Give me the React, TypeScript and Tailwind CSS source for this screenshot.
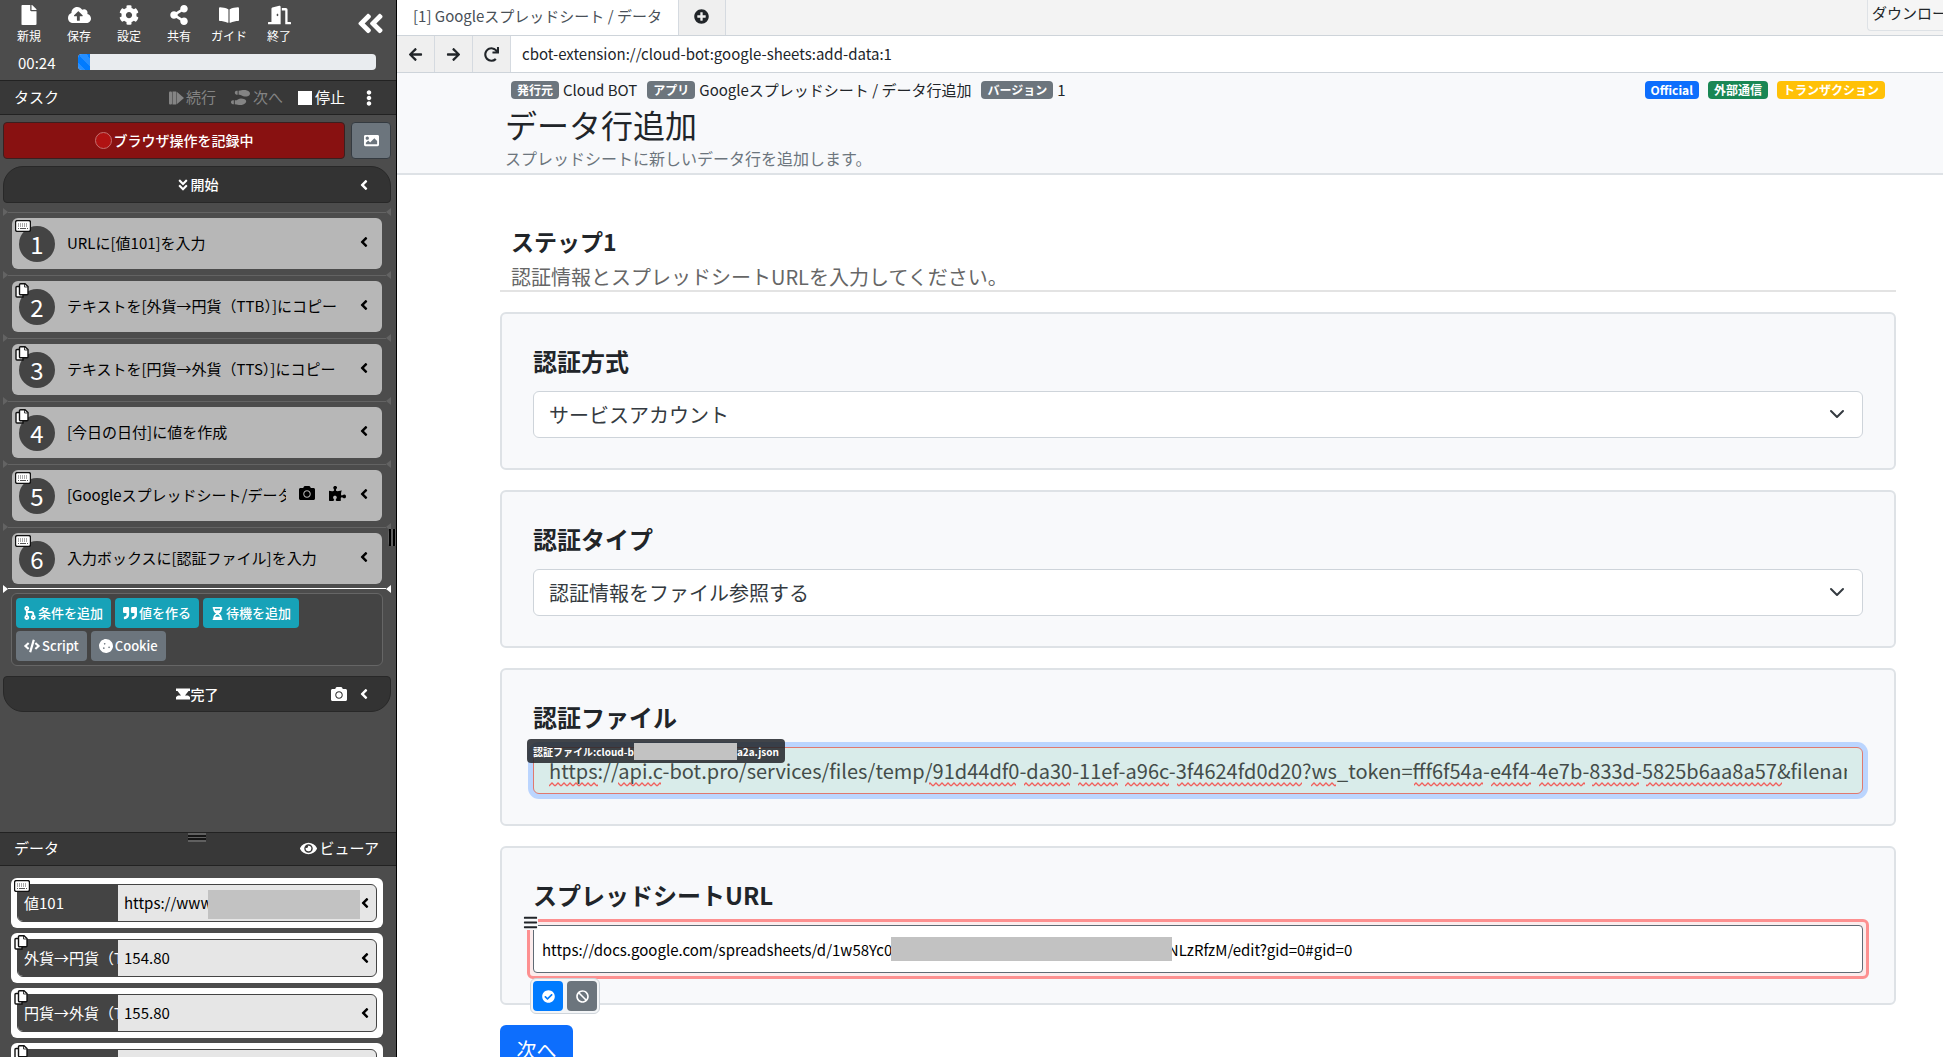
import type { ReactNode } from 'react';
import {
  FaAngleDoubleDown,
  FaAngleDoubleLeft,
  FaAngleLeft,
  FaArrowLeft,
  FaArrowRight,
  FaBan,
  FaBars,
  FaBookOpen,
  FaCamera,
  FaCheckCircle,
  FaCloudUploadAlt,
  FaCode,
  FaCog,
  FaCookie,
  FaDoorOpen,
  FaEllipsisV,
  FaEye,
  FaFile,
  FaHourglassHalf,
  FaImage,
  FaPlusCircle,
  FaPuzzlePiece,
  FaQuoteRight,
  FaRedo,
  FaShareAlt,
  FaShoePrints,
} from 'react-icons/fa';

type StepKind = 'input' | 'copy';

const tools = [
  { icon: FaFile, label: '新規' },
  { icon: FaCloudUploadAlt, label: '保存' },
  { icon: FaCog, label: '設定' },
  { icon: FaShareAlt, label: '共有' },
  { icon: FaBookOpen, label: 'ガイド' },
  { icon: FaDoorOpen, label: '終了' },
];

const steps: { kind: StepKind; text: string; extension?: boolean }[] = [
  { kind: 'input', text: 'URLに[値101]を入力' },
  { kind: 'copy', text: 'テキストを[外貨→円貨（TTB）]にコピー' },
  { kind: 'copy', text: 'テキストを[円貨→外貨（TTS）]にコピー' },
  { kind: 'copy', text: '[今日の日付]に値を作成' },
  { kind: 'input', text: '[Googleスプレッドシート/データ行追加]', extension: true },
  { kind: 'input', text: '入力ボックスに[認証ファイル]を入力' },
];

const dataItems: { kind: StepKind; name: string; value: string; masked?: boolean }[] = [
  { kind: 'input', name: '値101', value: 'https://www', masked: true },
  { kind: 'copy', name: '外貨→円貨（TTB）', value: '154.80' },
  { kind: 'copy', name: '円貨→外貨（TTS）', value: '155.80' },
  { kind: 'copy', name: '今日の日付', value: '' },
];

// [start, width] of the words marked by the spell checker
const misspelled = [
  [0, 49],
  [69, 43],
  [380, 87],
  [475, 46],
  [529, 40],
  [576, 44],
  [628, 125],
  [762, 25],
  [865, 69],
  [942, 40],
  [990, 46],
  [1043, 47],
  [1097, 136],
];

function KindIcon({ kind }: { kind: StepKind }) {
  if (kind === 'input') {
    return (
      <svg width="16" height="12" viewBox="0 0 16 12" className="block">
        <rect x="0.5" y="0.5" width="15" height="11" rx="2" fill="#fff" stroke="#111" strokeWidth="1.4" />
        <path d="M3 4h10M3 6h10" stroke="#555" strokeWidth="1" strokeDasharray="1 1" />
        <path d="M3 8.5h1M5 8.5h6M12 8.5h1" stroke="#555" strokeWidth="1" />
      </svg>
    );
  }
  return (
    <svg width="14" height="15" viewBox="0 0 14 15" className="block">
      <path d="M1 4.5a1 1 0 0 1 1-1h6v10.5H2a1 1 0 0 1-1-1z" fill="#fff" stroke="#111" strokeWidth="1.4" />
      <path d="M4.5 1.7a1 1 0 0 1 1-1H10L13 3.5v7.2a1 1 0 0 1-1 1H5.5a1 1 0 0 1-1-1z" fill="#fff" stroke="#111" strokeWidth="1.4" />
      <path d="M9.5 1v3h3" fill="none" stroke="#111" strokeWidth="0.8" />
    </svg>
  );
}

function ContinueIcon() {
  return (
    <svg width="15" height="14" viewBox="0 0 15 14" fill="currentColor">
      <rect x="0" y="0.5" width="3" height="13" rx="1" />
      <rect x="3.5" y="0.5" width="3.5" height="13" />
      <path d="M7.5 0.5 L15 7 L7.5 13.5z" />
    </svg>
  );
}

function BranchIcon() {
  return (
    <svg width="12" height="14" viewBox="0 0 12 14" fill="none" stroke="currentColor" strokeWidth="1.8">
      <circle cx="2.8" cy="2.5" r="1.5" />
      <circle cx="2.8" cy="11.5" r="1.5" />
      <circle cx="9.3" cy="11.5" r="1.5" />
      <path d="M2.8 4v6M2.8 6h4.5a2 2 0 0 1 2 2v2" />
    </svg>
  );
}

function FinishIcon() {
  return (
    <svg width="14" height="12" viewBox="0 0 14 12" fill="currentColor">
      <path d="M0 0.5h14v2.5h-1.5L9 7.5h3L14 9v2.5H0V9l2-1.5h3L1.5 3H0z" />
    </svg>
  );
}

function Separator({ active = false }: { active?: boolean }) {
  return (
    <div className={`-mx-[9px] flex items-center ${active ? 'h-[9px] text-white' : 'h-3 text-[#636363]'}`}>
      <span className="border-y-[4px] border-l-[5px] border-y-transparent border-l-current" />
      <span className="h-px flex-1 bg-current" />
      <span className="border-y-[4px] border-r-[5px] border-y-transparent border-r-current" />
    </div>
  );
}

function ActionButton({ icon, children, tone }: { icon: ReactNode; children: ReactNode; tone: 'info' | 'gray' }) {
  return (
    <button
      type="button"
      className={`flex h-[30px] items-center gap-[2px] rounded px-2 text-[13px] font-medium whitespace-nowrap text-white ${
        tone === 'info' ? 'bg-[#17a2b8]' : 'bg-[#6c757d]'
      }`}
    >
      {icon}
      {children}
    </button>
  );
}

function Sidebar() {
  return (
    <aside className="relative flex w-[397px] shrink-0 flex-col border-r border-black bg-[#4c4c4c] text-[15px] text-white">
      <div className="flex items-start pt-[5px] pr-[10px] pl-1">
        {tools.map((tool) => (
          <button key={tool.label} type="button" className="flex w-[50px] flex-col items-center text-[12px] leading-[22px]">
            <tool.icon size={tool.label === '終了' || tool.label === '保存' ? 23 : 20} className="h-5" />
            {tool.label}
          </button>
        ))}
        <button type="button" aria-label="サイドバーを閉じる" className="mt-[3px] ml-auto">
          <FaAngleDoubleLeft size={31} />
        </button>
      </div>
      <div className="flex h-[33px] items-center pr-5 pb-[3px] pl-[18px]">
        <span className="w-[60px] leading-none">00:24</span>
        <div className="h-4 flex-1 overflow-hidden rounded bg-[#e9ecef]">
          <div className="h-full w-[4%] bg-[#007bff] bg-[linear-gradient(45deg,rgba(255,255,255,0.15)_25%,transparent_25%,transparent_50%,rgba(255,255,255,0.15)_50%,rgba(255,255,255,0.15)_75%,transparent_75%)] bg-[length:16px_16px]" />
        </div>
      </div>

      <div className="flex h-[35px] items-center border-y border-[#222] bg-[#383838] pr-[19px] pl-[14px]">
        <h2>タスク</h2>
        <button type="button" className="ml-auto flex items-center gap-[2px] text-[#848484]" disabled>
          <ContinueIcon />
          続行
        </button>
        <button type="button" className="ml-[15px] flex items-center gap-[3px] text-[#848484]" disabled>
          <FaShoePrints size={19} />
          次へ
        </button>
        <button type="button" className="ml-[15px] flex items-center gap-[3px]">
          <span className="size-[14px] bg-white" />
          停止
        </button>
        <button type="button" aria-label="メニュー" className="ml-4">
          <FaEllipsisV size={16} />
        </button>
      </div>

      <div className="flex gap-[6px] pt-[7px] pr-[5px] pl-[3px] text-[14px]">
        <button type="button" className="flex h-[37px] flex-1 items-center justify-center gap-[2px] rounded border border-[#3a2020] bg-[#881111] font-medium">
          <span className="size-[17px] rounded-full border border-[#c47070] bg-[#b01212]" />
          ブラウザ操作を記録中
        </button>
        <button type="button" aria-label="画像" className="flex w-10 items-center justify-center rounded border border-[#343a40] bg-[#6c757d]">
          <FaImage size={15} />
        </button>
      </div>

      <div className="pt-[7px] pr-[5px] pl-[3px]">
        <div className="relative flex h-[37px] items-center justify-center gap-px rounded-t-[20px] rounded-b border border-[#282828] bg-[#333] text-[14px] font-medium">
          <FaAngleDoubleDown size={14} />
          開始
          <button type="button" aria-label="開始の詳細" className="absolute right-[18px]">
            <FaAngleLeft size={16} />
          </button>
        </div>
      </div>

      <ol className="pt-[3px] pr-[14px] pl-3">
        {steps.map((step, index) => (
          <li key={index}>
            <Separator />
            <div className="relative flex h-[51px] items-center rounded-md bg-[#b7b7b7] pr-[10px] pl-[7px] text-black">
              <span className="flex size-9 shrink-0 items-center justify-center rounded-full bg-[#444] text-[24px] leading-none text-white">
                {index + 1}
              </span>
              <span className="absolute top-[2px] left-[3px]">
                <KindIcon kind={step.kind} />
              </span>
              <span className="ml-3 min-w-0 flex-1 overflow-hidden whitespace-nowrap">{step.text}</span>
              {step.extension && (
                <span className="mb-1 ml-[13px] flex gap-[14px]">
                  <FaCamera size={16} />
                  <FaPuzzlePiece size={17} />
                </span>
              )}
              <button type="button" aria-label={`${index + 1}の詳細`} className="mb-1 ml-[10px]">
                <FaAngleLeft size={16} />
              </button>
            </div>
          </li>
        ))}
        <li>
          <Separator active />
        </li>
      </ol>

      <div className="mr-[13px] ml-[11px] flex flex-col gap-[3px] rounded-md border border-[#666] bg-[#444] p-1">
        <div className="flex gap-1">
          <ActionButton tone="info" icon={<BranchIcon />}>
            条件を追加
          </ActionButton>
          <ActionButton tone="info" icon={<FaQuoteRight size={14} />}>
            値を作る
          </ActionButton>
          <ActionButton tone="info" icon={<FaHourglassHalf size={13} />}>
            待機を追加
          </ActionButton>
        </div>
        <div className="flex gap-1">
          <ActionButton tone="gray" icon={<FaCode size={16} />}>
            Script
          </ActionButton>
          <ActionButton tone="gray" icon={<FaCookie size={14} />}>
            Cookie
          </ActionButton>
        </div>
      </div>

      <div className="pt-[10px] pr-[5px] pl-[3px]">
        <div className="relative flex h-9 items-center justify-center gap-px rounded-t rounded-b-[20px] border border-[#282828] bg-[#333] text-[14px] font-medium">
          <FinishIcon />
          完了
          <span className="absolute right-[18px] flex items-center gap-[9px]">
            <FaCamera size={16} />
            <button type="button" aria-label="完了の詳細">
              <FaAngleLeft size={16} />
            </button>
          </span>
        </div>
      </div>

      <section className="mt-auto h-[225px] overflow-hidden">
        <div className="relative flex h-[34px] items-center justify-between border-y border-[#222] bg-[#383838] pr-[17px] pb-[2px] pl-[14px]">
          <h2>データ</h2>
          <button type="button" className="flex items-center gap-[3px]">
            <FaEye size={17} />
            ビューア
          </button>
          <span className="absolute top-0 left-[188px] flex h-[9px] w-[18px] flex-col justify-evenly bg-[#606060]">
            <span className="h-[2px] bg-[#151515]" />
            <span className="h-[2px] bg-[#151515]" />
          </span>
        </div>
        <ul className="flex flex-col gap-[5px] pt-3 pr-[13px] pl-[11px]">
          {dataItems.map((item) => (
            <li key={item.name} className="relative rounded-md bg-white p-[6px]">
              <div className="flex h-[38px] items-center overflow-hidden rounded-md border border-[#444] bg-[#e6e6e6] text-black">
                <span className="flex h-full w-[100px] shrink-0 items-center overflow-hidden bg-[#444] pl-[6px] whitespace-nowrap text-white">
                  {item.name}
                </span>
                <span className="ml-[6px] flex-1 whitespace-nowrap">{item.value}</span>
                <button type="button" aria-label={`${item.name}の詳細`} className="mr-[3px]">
                  <FaAngleLeft size={16} />
                </button>
              </div>
              {item.masked && <span className="absolute top-3 right-[23px] h-[29px] w-[152px] bg-[#c2c2c2]" />}
              <span className="absolute top-[2px] left-[3px]">
                <KindIcon kind={item.kind} />
              </span>
            </li>
          ))}
        </ul>
      </section>

      <span className="absolute top-[529px] right-0 flex h-[17px] w-2 justify-evenly rounded-l-sm bg-[#606060]">
        <span className="w-[2px] bg-black" />
        <span className="w-[2px] bg-black" />
      </span>
    </aside>
  );
}

function Badge({ className, children }: { className: string; children: ReactNode }) {
  return <span className={`rounded px-[6px] text-[12px] leading-[18px] font-bold text-white ${className}`}>{children}</span>;
}

function BrowserBar() {
  return (
    <>
      <div className="flex h-9 overflow-hidden border-b border-[#ced4da] bg-[#f3f3f3] text-[15px]">
        <button type="button" className="border-r border-[#d5dae0] bg-white px-4 pb-[2px] whitespace-nowrap text-[#495057]">
          [1] Googleスプレッドシート / データ
        </button>
        <button type="button" aria-label="タブを追加" className="flex w-[47px] items-center justify-center border-r border-[#d5dae0] bg-[#efefef] pb-[2px]">
          <FaPlusCircle size={15} />
        </button>
        <button type="button" className="ml-auto h-[31px] w-[76px] overflow-hidden rounded-bl border-b border-l border-[#dee2e6] bg-[#f5f5f5] pb-[3px] pl-1 text-left whitespace-nowrap">
          ダウンロード
        </button>
      </div>
      <div className="flex h-[37px] border-b border-[#ced4da] text-[15px]">
        <button type="button" aria-label="戻る" className="flex w-[38px] items-center justify-center border-r border-[#d5dae0] bg-[#efefef]">
          <FaArrowLeft size={15} />
        </button>
        <button type="button" aria-label="進む" className="flex w-[38px] items-center justify-center border-r border-[#d5dae0] bg-[#efefef]">
          <FaArrowRight size={15} />
        </button>
        <button type="button" aria-label="再読み込み" className="flex w-[38px] items-center justify-center border-r border-[#d5dae0] bg-[#efefef]">
          <FaRedo size={15} />
        </button>
        <input aria-label="アドレス" className="flex-1 px-[11px] outline-none" defaultValue="cbot-extension://cloud-bot:google-sheets:add-data:1" />
      </div>
    </>
  );
}

function FieldCard({ id, label, children }: { id: string; label: string; children: ReactNode }) {
  return (
    <div className="rounded-md border-2 border-[#dee2e6] bg-[#f8f9fb] px-[31px] pt-[29px] pb-[30px]">
      <label htmlFor={id} className="mb-3 block text-[24px] leading-9 font-bold">
        {label}
      </label>
      {children}
    </div>
  );
}

function SelectBox({ id, value }: { id: string; value: string }) {
  return (
    <div className="relative">
      <select id={id} className="block h-[47px] w-full appearance-none rounded-md border border-[#ced4da] bg-white px-[15px] text-[20px] text-[#343a40]">
        <option>{value}</option>
      </select>
      <svg width="16" height="16" viewBox="0 0 16 16" className="pointer-events-none absolute top-[15px] right-[18px]">
        <path d="m2 5 6 6 6-6" fill="none" stroke="#343a40" strokeWidth="2" strokeLinecap="round" strokeLinejoin="round" />
      </svg>
    </div>
  );
}

function Squiggles() {
  return (
    <svg width="1240" height="5" className="pointer-events-none absolute top-[35px] left-4 max-w-none">
      <defs>
        <pattern id="squiggle" width="6" height="5" patternUnits="userSpaceOnUse">
          <path d="M0 4 L3 1 L6 4" fill="none" stroke="#f0605c" strokeWidth="1.3" />
        </pattern>
      </defs>
      {misspelled.map(([x, width]) => (
        <rect key={x} x={x} y="0" width={width} height="5" fill="url(#squiggle)" />
      ))}
    </svg>
  );
}

export default function App() {
  return (
    <div className="flex h-screen overflow-hidden bg-white font-['Noto_Sans_CJK_JP',sans-serif] text-[#212529]">
      <Sidebar />
      <main className="min-w-0 flex-1">
        <BrowserBar />

        <header className="border-b-2 border-[#dee2e6] bg-[#f8f9fb] pt-[7px] pr-[58px] pb-1 pl-[108px]">
          <div className="flex items-center pl-[6px] text-[15px] leading-5">
            <Badge className="bg-[#6c757d]">発行元</Badge>
            <span className="mr-[10px] ml-1">Cloud BOT</span>
            <Badge className="bg-[#6c757d]">アプリ</Badge>
            <span className="mr-[10px] ml-1">Googleスプレッドシート / データ行追加</span>
            <Badge className="bg-[#6c757d]">バージョン</Badge>
            <span className="ml-1">1</span>
            <div className="ml-auto flex gap-[9px]">
              <Badge className="bg-[#0d6efd]">Official</Badge>
              <Badge className="bg-[#198754]">外部通信</Badge>
              <Badge className="bg-[#ffc107]">トランザクション</Badge>
            </div>
          </div>
          <h1 className="mt-[2px] text-[32px] leading-[45px]">データ行追加</h1>
          <p className="leading-[22px] text-[#6c757d]">スプレッドシートに新しいデータ行を追加します。</p>
        </header>

        <form className="pt-[48px] pr-[47px] pl-[103px]">
          <div className="mb-5 border-b-2 border-[#e3e3e3] pl-[11px]">
            <h2 className="mb-1 text-[23px] leading-9 font-bold">ステップ1</h2>
            <p className="text-[20px] leading-[27px] text-[#666]">認証情報とスプレッドシートURLを入力してください。</p>
          </div>

          <div className="flex flex-col gap-5">
            <FieldCard id="auth-method" label="認証方式">
              <SelectBox id="auth-method" value="サービスアカウント" />
            </FieldCard>
            <FieldCard id="auth-type" label="認証タイプ">
              <SelectBox id="auth-type" value="認証情報をファイル参照する" />
            </FieldCard>
            <FieldCard id="auth-file" label="認証ファイル">
              <div className="relative">
                <input
                  id="auth-file"
                  spellCheck={false}
                  className="block h-[47px] w-full rounded-md border border-[#e0796f] bg-[#d9ecea] px-[15px] text-[20px] text-[#444c49] ring-[5px] ring-[#bbd5fe] outline-none"
                  defaultValue="https://api.c-bot.pro/services/files/temp/91d44df0-da30-11ef-a96c-3f4624fd0d20?ws_token=fff6f54a-e4f4-4e7b-833d-5825b6aa8a57&filename=cloud-bot.json"
                />
                <Squiggles />
                <div className="absolute -top-2 -left-[6px] flex h-6 items-center rounded-sm bg-[#212529]/85 px-[6px] text-[10px] font-bold text-white">
                  認証ファイル:cloud-b
                  <span className="h-[17px] w-[103px] bg-[#c2c2c2]" />
                  a2a.json
                </div>
              </div>
            </FieldCard>
            <FieldCard id="sheet-url" label="スプレッドシートURL">
              <div className="relative">
                <div className="-m-[6px] rounded-md border-[3px] border-[#fd9090] bg-[#fcecec] p-[3px]">
                  <input
                    id="sheet-url"
                    className="block h-12 w-full rounded-sm border border-[#5f6b75] bg-white px-2 text-[15px] text-black outline-none"
                    defaultValue={`https://docs.google.com/spreadsheets/d/1w58Yc0${'\u00a0'.repeat(82)}NLzRfzM/edit?gid=0#gid=0`}
                  />
                </div>
                <span className="absolute top-[18px] left-[358px] h-6 w-[281px] bg-[#c2c2c2]" />
                <span className="absolute -top-1 -left-[10px] bg-[#f8f9fb]">
                  <FaBars size={15} />
                </span>
                <div className="absolute top-[59px] -left-[3px] flex gap-1 rounded-md border border-[#ced4da] bg-[#f3f5f7] p-[2px] text-white">
                  <button type="button" aria-label="確定" className="flex h-[30px] w-[30px] items-center justify-center rounded-sm bg-[#007bff]">
                    <FaCheckCircle size={13} />
                  </button>
                  <button type="button" aria-label="取消" className="flex h-[30px] w-[30px] items-center justify-center rounded-sm bg-[#6c757d]">
                    <FaBan size={13} />
                  </button>
                </div>
              </div>
            </FieldCard>
          </div>

          <button type="button" className="mt-5 h-[50px] w-[73px] rounded-md bg-[#0d6efd] text-[20px] text-white">
            次へ
          </button>
        </form>
      </main>
    </div>
  );
}
